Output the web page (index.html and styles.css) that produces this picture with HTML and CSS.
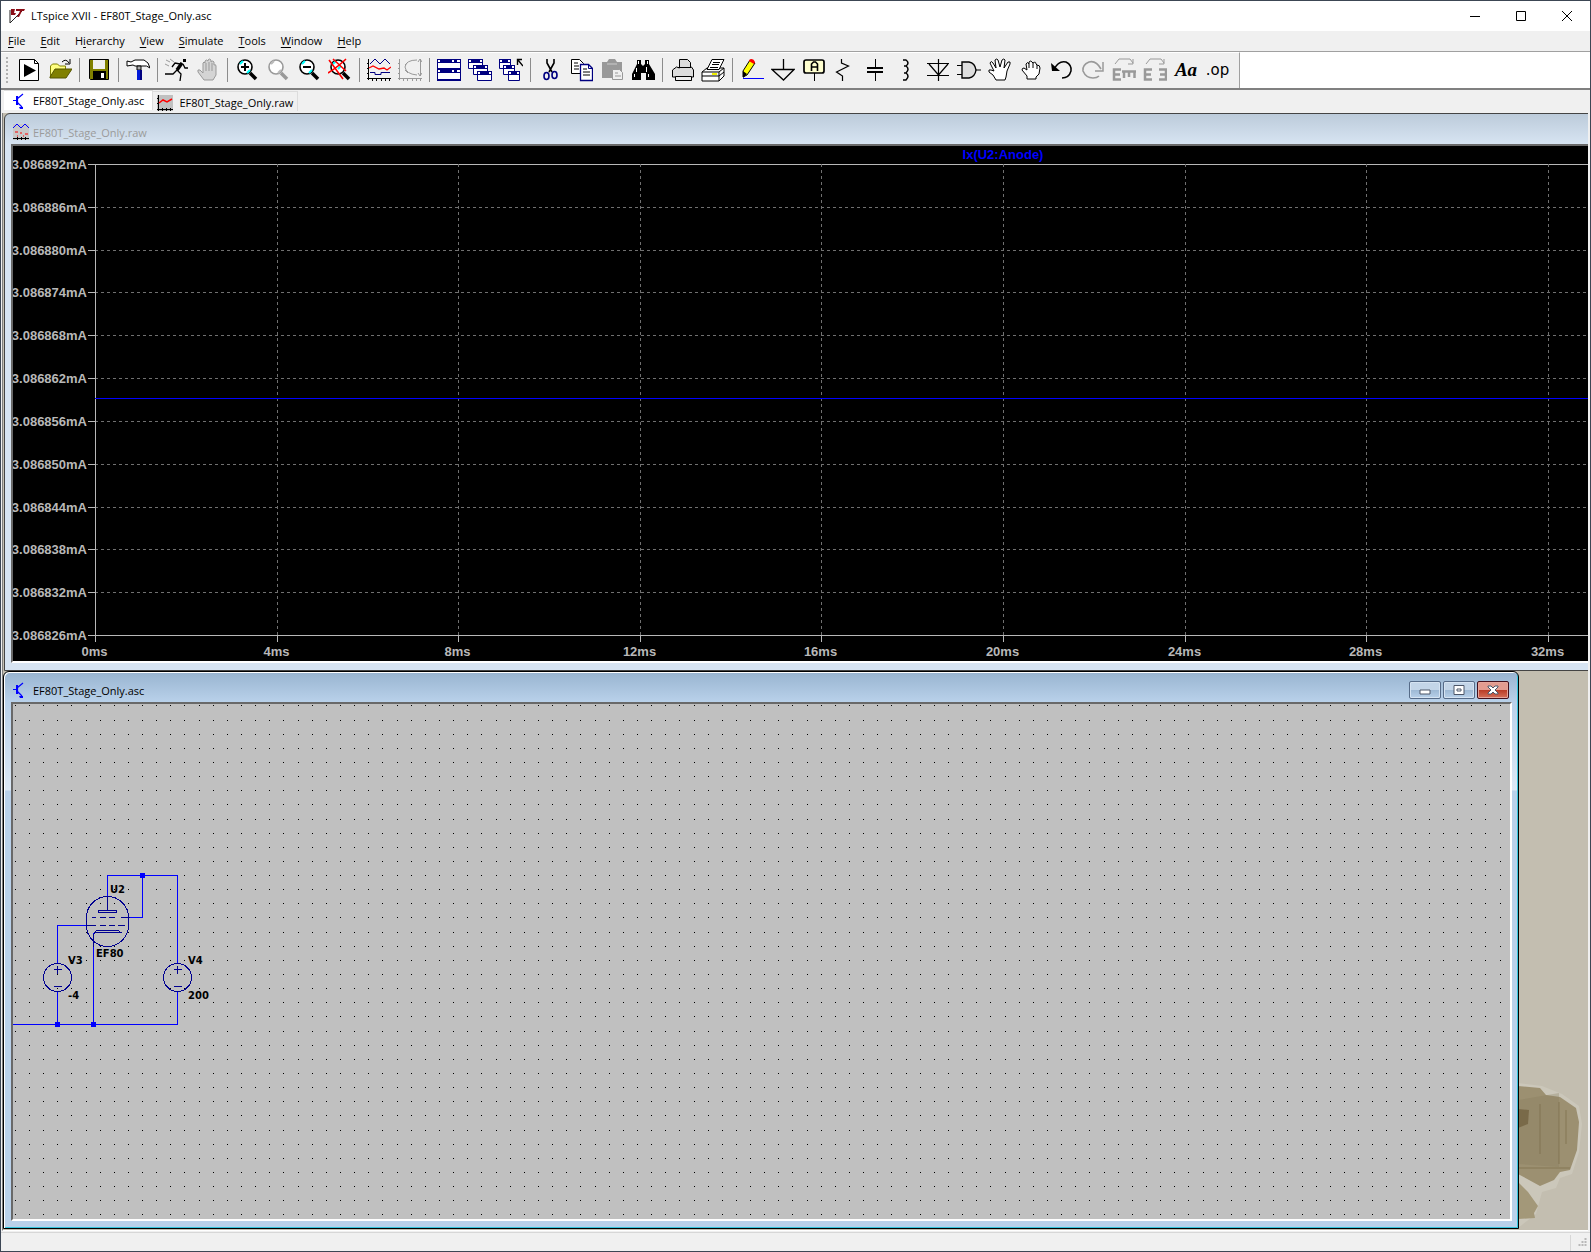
FILE: index.html
```html
<!DOCTYPE html>
<html lang="en">

<head>
    <meta charset="UTF-8">
    <meta name="viewport" content="width=device-width, initial-scale=1.0">
    <title>LTspice XVII - EF80T_Stage_Only.asc</title>
    <link rel="stylesheet" href="styles.css">
    <script src="script.js" defer></script>
</head>

<body>
    <!-- Shared symbols -->
    <svg class="symbols" aria-hidden="true">
        <symbol id="transistor" viewBox="0 0 16 16">
            <path d="M0 7.500h4M4.500 3v9M4 6l6-5M4 9l5 5" stroke="#00f" fill="none" stroke-width="1.200" />
            <path d="M3 3h2v9H3zM6 14h4v2H7z" fill="#00f" />
        </symbol>
        <symbol id="lens" viewBox="0 0 24 24">
            <path d="M15 15l6 6" stroke="currentColor" stroke-width="3.500" />
            <circle cx="10" cy="9" r="7" fill="#fff" stroke="currentColor" stroke-width="1.600" />
        </symbol>
    </svg>

    <div class="app">
        <header class="title-bar">
            <svg class="logo" viewBox="0 0 16 16">
                <path d="M1 2v13l13-13" fill="#fff" stroke="#222" />
                <path d="M2 1h4L5 5h2l-1 2H2zM7 1h9l-1 2h-2l-3 6H8l3-6H7z" fill="#8b0d16" />
            </svg>
            <h1>LTspice XVII - EF80T_Stage_Only.asc</h1>
            <div class="window-buttons">
                <button type="button" aria-label="Minimize"><svg viewBox="0 0 10 10"><path d="M0 5.500h10" /></svg></button>
                <button type="button" aria-label="Maximize"><svg viewBox="0 0 10 10"><path d="M.5.5h9v9h-9z" /></svg></button>
                <button type="button" aria-label="Close"><svg viewBox="0 0 10 10"><path d="M0 0l10 10M10 0L0 10" /></svg></button>
            </div>
        </header>

        <nav class="menu-bar">
            <button type="button"><u>F</u>ile</button>
            <button type="button"><u>E</u>dit</button>
            <button type="button">H<u>i</u>erarchy</button>
            <button type="button"><u>V</u>iew</button>
            <button type="button"><u>S</u>imulate</button>
            <button type="button"><u>T</u>ools</button>
            <button type="button"><u>W</u>indow</button>
            <button type="button"><u>H</u>elp</button>
        </nav>

        <div class="toolbar-row">
            <div class="toolbar">
                <span class="grip"></span>
                <button type="button" aria-label="New schematic"><svg viewBox="0 0 24 24">
                    <path d="M2.500 1.500h15l4 4v17h-19z" fill="#fff" stroke="#000" /><path d="M17.500 1.500v4h4" fill="none" stroke="#000" /><path d="M7 6v13l12-6.500z" />
                </svg></button>
                <button type="button" aria-label="Open"><svg viewBox="0 0 24 24">
                    <path d="M2.500 19V8l2-2h5l2 2h6v4" fill="#ffff80" stroke="#808000" /><path d="M2 19l5-8h17l-6 9H2z" fill="#808000" stroke="#555500" /><path d="M14 4q4-4 7 1M22 1v5h-5" fill="none" stroke="#000" />
                </svg></button>
                <span class="separator"></span>
                <button type="button" aria-label="Save"><svg viewBox="0 0 24 24">
                    <path d="M2.500 1.500h19v20h-18l-1-1z" fill="#808000" stroke="#000" /><path d="M6 2h12v9H6z" fill="#efefef" /><path d="M6 13h13v8H6z" /><path d="M14 15h3v5h-3z" fill="#fff" />
                </svg></button>
                <span class="separator"></span>
                <button type="button" aria-label="Control panel"><svg viewBox="0 0 24 24">
                    <path d="M1 3l4 1 4-2h9q5 2 6 8-3-3-8-2H9L7 7 1 8z" fill="#fff" stroke="#000" /><path d="M11 8h4v4h-4z" fill="#aaa" stroke="#000" /><path d="M11 12h5v10h-5z" fill="#0018d8" /><path d="M14 12h2v10h-2z" fill="#000080" />
                </svg></button>
                <span class="separator"></span>
                <button type="button" aria-label="Run"><svg viewBox="0 0 24 24">
                    <path d="M18 1h3v3h-3z" /><path d="M17 5l-5 7 4 4-1 7M12 12l-4 4H0M18 6l2 4h3M15 6l-5-1-3 4" fill="none" stroke="#000" stroke-width="1.300" /><path d="M17 5l-5 7" stroke="#000" stroke-width="3.500" /><path d="M1 2l4 2M5 1l4 3M0 6l4 2" stroke="#999" />
                </svg></button>
                <button type="button" aria-label="Halt" disabled><svg viewBox="0 0 24 24">
                    <path d="M8 22l-6-8q-1-3 2-2l3 3V5q1-2 2 0V3q1.500-2 3 0V2q1.500-2 3 0v2q2-2 3 0v3q2-1 2 1v9l-3 5z" fill="#d4d4d4" stroke="#999" /><path d="M10 5v8M13 4v9M16 5v8" stroke="#999" />
                </svg></button>
                <span class="separator"></span>
                <button type="button" aria-label="Zoom in"><svg viewBox="0 0 24 24"><use href="#lens" /><path d="M5 6l3-3M12 15l3-3" stroke="#0ff" stroke-width="2" /><path d="M6 9h8M10 5v8" stroke="#000" stroke-width="2" /></svg></button>
                <button type="button" aria-label="Pan" disabled><svg class="gray" viewBox="0 0 24 24"><use href="#lens" /><path d="M5 6l3-3M12 15l3-3" stroke="#bbb" stroke-width="2" /></svg></button>
                <button type="button" aria-label="Zoom out"><svg viewBox="0 0 24 24"><use href="#lens" /><path d="M5 6l3-3M12 15l3-3" stroke="#0ff" stroke-width="2" /><path d="M6 9h8" stroke="#000" stroke-width="2" /></svg></button>
                <button type="button" aria-label="Zoom full"><svg viewBox="0 0 24 24"><use href="#lens" /><path d="M5 6l3-3M10 11l3-3" stroke="#0ff" stroke-width="2" /><path d="M1 2l14 19M18 1Q11 8 0 15M5 1l13 12" fill="none" stroke="#f00" stroke-width="1.600" /></svg></button>
                <span class="separator"></span>
                <button type="button" aria-label="Waveforms"><svg viewBox="0 0 24 24">
                    <path d="M1.500 1v21M0 20.500h24M0 5.500h2M0 10.500h2M0 15.500h2M5.500 20v3M9.500 20v3M14.500 20v3M18.500 20v3M22.500 20v3" stroke="#000" /><path d="M3 6l5-5 5 5 5-5 5 5M3 14.500h5v2h6v-2h9" fill="none" stroke="#000080" /><path d="M2 10l4-2 6 3 5-1 3 2 4-3" fill="none" stroke="#f00" stroke-width="1.300" />
                </svg></button>
                <button type="button" aria-label="Autorange" disabled><svg viewBox="0 0 24 24">
                    <path d="M1.500 1v21M0 20.500h24M0 5.500h2M0 10.500h2M0 15.500h2M5.500 20v3M9.500 20v3M14.500 20v3M18.500 20v3M22.500 20v3M22.500 1v17M20 4l2-3 2 3M20 15l2 3 2-3M19 2Q8 2 7 9q1 7 12 8M7 7l3-3M7 12l3 3" fill="none" stroke="#999" />
                </svg></button>
                <span class="separator"></span>
                <button type="button" aria-label="Tile windows"><svg viewBox="0 0 24 24">
                    <path d="M0 1h24v22H0z" fill="#000080" /><path d="M1 5h22v5H1zM1 15h22v6H1zM1 2h2v2H1zM15 2h2v2h-2zM20 2h3v2h-3zM1 12h2v2H1zM15 12h2v2h-2zM20 12h3v2h-3z" fill="#fff" />
                </svg></button>
                <button type="button" aria-label="Cascade windows"><svg viewBox="0 0 24 24">
                    <g fill="#fff" stroke="#000080"><path d="M.5 1.500h14v9H.5z" /><path d="M5.500 7.500h14v9h-14z" /><path d="M9.500 13.500h14v9h-14z" /></g><path d="M0 1h15v4H0zM5 7h15v4H5zM9 13h15v4H9z" fill="#000080" /><path d="M1 2h2v2H1zM12 2h2v2h-2zM6 8h2v2H6zM17 8h2v2h-2zM10 14h2v2h-2zM21 14h2v2h-2z" fill="#fff" />
                </svg></button>
                <button type="button" aria-label="Close all windows"><svg viewBox="0 0 24 24">
                    <g fill="#fff" stroke="#000080"><path d="M.5 1.500h11v9H.5z" /><path d="M4.500 7.500h11v9h-11z" /><path d="M9.500 13.500h11v9h-11z" /></g><path d="M0 1h12v4H0zM4 7h12v4H4zM9 13h12v4H9z" fill="#000080" /><path d="M1 2h2v2H1zM9 2h2v2H9zM5 8h2v2H5zM13 8h2v2h-2zM10 14h2v2h-2zM18 14h2v2h-2z" fill="#fff" /><path d="M18.500 7V1.500H23M19 2l5 6" fill="none" stroke="#000" stroke-width="1.400" />
                </svg></button>
                <span class="separator"></span>
                <button type="button" aria-label="Cut"><svg viewBox="0 0 24 24">
                    <path d="M9 1v4l5 9M16 1v4l-5 9" fill="none" stroke="#000" stroke-width="1.600" /><g fill="none" stroke="#000080" stroke-width="1.600"><ellipse cx="8.500" cy="18" rx="2.500" ry="3.500" /><ellipse cx="16.500" cy="17" rx="2.500" ry="3.500" /></g>
                </svg></button>
                <button type="button" aria-label="Copy"><svg viewBox="0 0 24 24">
                    <path d="M2.500 1.500h8l4 4v10h-12z" fill="#fff" stroke="#000" /><path d="M5 5h4M5 8h5M5 11h5" stroke="#000" /><path d="M11.500 6.500h8l4 4v12h-12z" fill="#fff" stroke="#000080" stroke-width="1.300" /><path d="M19.500 6.500v4h4" fill="none" stroke="#000080" /><path d="M14 11h4M14 14h7M14 17h7" stroke="#000" />
                </svg></button>
                <button type="button" aria-label="Paste" disabled><svg viewBox="0 0 24 24">
                    <path d="M2 4h5l2-3h6l2 3h5v16H2z" fill="#999" /><path d="M7 6h10" stroke="#ccc" /><path d="M12.500 11.500h7l3 3v7h-10z" fill="#f0f0f0" stroke="#999" /><path d="M15 15h3M15 18h6" stroke="#999" />
                </svg></button>
                <button type="button" aria-label="Find"><svg viewBox="0 0 24 24">
                    <path d="M6 2h4v4l2 2 2-2V2h4v4l6 10v6h-9v-7h-5v7H1v-6L6 6z" /><path d="M7 3h1v3H7zM16 3h1v3h-1zM5 10h1v4H5zM3 16h1v3H3zM15 9h1v5h-1zM17 16h1v3h-1z" fill="#fff" />
                </svg></button>
                <span class="separator"></span>
                <button type="button" aria-label="Print"><svg viewBox="0 0 24 24">
                    <path d="M9.500 10V1.500h8l3 3V9h1l2 3v7h-2v3h-16v-3h-3v-7l4-3z" fill="#ddd" stroke="#000" /><path d="M8 9.500h13M5.500 18.500h16v4h-16z" fill="#eee" stroke="#000" />
                </svg></button>
                <button type="button" aria-label="Print setup"><svg viewBox="0 0 24 24">
                    <path d="M1 14l5-4h17v8l-5 5H1zM1 14h17l5-4M18 14v9M1 18h17l5-4" fill="#fff" stroke="#000" /><path d="M11 1.500h12l-5 10H6z" fill="#fff" stroke="#000" /><path d="M12 4.500h7M11 6.500h7M9 9.500h8" stroke="#000" /><path d="M11 15h5v2h-5z" fill="#ee0" />
                </svg></button>
                <span class="separator"></span>
                <button type="button" aria-label="Wire"><svg viewBox="0 0 24 24">
                    <path d="M10 2l5 3-8 12-4 2v-6z" fill="#ff0" stroke="#000" /><path d="M9 2q4-3 6 2l-1 2-5-3z" fill="#f00" /><path d="M3 13l4 3-4 4z" /><path d="M3 20.500h21" stroke="#00f" />
                </svg></button>
                <button type="button" aria-label="Ground"><svg viewBox="0 0 24 24"><path d="M12.500 1v10M1 11.500h22L12.500 22z" fill="none" stroke="#000" stroke-width="1.300" /></svg></button>
                <button type="button" aria-label="Label net"><svg viewBox="0 0 24 24">
                    <path d="M12.500 15v8" stroke="#000" /><rect x="2" y="2" width="20" height="13" rx="2" fill="#ffffd0" stroke="#000" stroke-width="1.700" /><path d="M9.500 13V6l2-2h2l2 2v7M9.500 9h6" fill="none" stroke="#000" stroke-width="1.600" />
                </svg></button>
                <button type="button" aria-label="Resistor"><svg viewBox="0 0 24 24"><path d="M8.500 1v4l7 3-12 6 6 4v5" fill="none" stroke="#000" stroke-width="1.200" /></svg></button>
                <button type="button" aria-label="Capacitor"><svg viewBox="0 0 24 24"><path d="M11.500 1v8M11.500 15v8" stroke="#000" /><path d="M3 10h16M3 14h16" stroke="#000" stroke-width="2" /></svg></button>
                <button type="button" aria-label="Inductor"><svg viewBox="0 0 24 24"><path d="M8 2h3q4 3 0 6H9h2q4 3 0 7H9h2q4 3 0 7H8" fill="none" stroke="#000" stroke-width="1.500" /></svg></button>
                <button type="button" aria-label="Diode"><svg viewBox="0 0 24 24"><path d="M12.500 1v22M1 5.500h22M3 6l9.500 11L22 6M1 17.500h22" fill="none" stroke="#000" stroke-width="1.200" /></svg></button>
                <button type="button" aria-label="Component"><svg viewBox="0 0 24 24"><path d="M0 7.500h5M0 16.500h5M18 12h6" stroke="#000" /><path d="M5 4h7q6 1 7 8-1 7-7 8H5z" fill="#ddd" stroke="#000" stroke-width="1.400" /></svg></button>
                <button type="button" aria-label="Move"><svg viewBox="0 0 24 24">
                    <path d="M8 22l-3-5-4-3q-1-3 2-2l3 1-4-8q1-3 3 0l3 5-1-8q2-2 3 0l2 7 2-7q2-2 3 0l-1 8 4-6q3-1 2 2l-3 7-1 6-1 3z" fill="#fff" stroke="#000" />
                </svg></button>
                <button type="button" aria-label="Drag"><svg viewBox="0 0 24 24">
                    <path d="M8 21v-3l-5-6q0-2 2-2l3 2-1-6q2-3 3 0V4q2-2 3 0l1 1q3-2 3 1l1 1q3 0 3 3l-1 6-3 3v2z" fill="#fff" stroke="#000" /><path d="M10 6v4M14 5v5M18 7v4" stroke="#000" />
                </svg></button>
                <button type="button" aria-label="Undo"><svg viewBox="0 0 24 24"><path d="M4 11Q9 2 16 4q6 3 5 9-2 7-9 7" fill="none" stroke="#000" stroke-width="1.500" /><path d="M1 5l1 8h8z" /></svg></button>
                <button type="button" aria-label="Redo" disabled><svg viewBox="0 0 24 24"><path d="M20 11Q15 2 8 4 1 7 2 13q3 7 10 7 4 0 6-2" fill="none" stroke="#999" stroke-width="1.600" /><path d="M22 4v9h-8" fill="none" stroke="#999" stroke-width="1.500" /></svg></button>
                <button type="button" aria-label="Rotate" disabled><svg viewBox="0 0 24 24"><path d="M3 6l4-5h11l3 4M21 1v5h-5" fill="none" stroke="#999" /><path d="M9 11.500H2v10h7M2 16.500h6M10 13.500h14M12 13v7M17 13v6M22.500 13v7" fill="none" stroke="#999" stroke-width="2.500" /></svg></button>
                <button type="button" aria-label="Mirror" disabled><svg viewBox="0 0 24 24"><path d="M3 6l4-5h11l3 4M21 1v5h-5" fill="none" stroke="#999" /><path d="M9 11.500H2v10h7M2 16.500h6M16 11.500h7v10h-7M23 16.500h-6" fill="none" stroke="#999" stroke-width="2.500" /></svg></button>
                <button type="button" class="text-tool" aria-label="Text">Aa</button>
                <button type="button" class="op-tool" aria-label="SPICE directive">.op</button>
            </div>
        </div>

        <div class="tabs">
            <button type="button" class="tab active"><svg><use href="#transistor" /></svg>EF80T_Stage_Only.asc</button>
            <button type="button" class="tab"><svg viewBox="0 0 16 16">
                <path d="M0 0h16v16H0z" fill="#c0c0c0" /><path d="M1.500 0v16M0 14.500h16M0 3.500h2M0 8.500h2M5.500 13v3M9.500 13v3M13.500 13v3" stroke="#000" /><path d="M2 8l4-3 4 2 5-3" fill="none" stroke="#f00" stroke-width="1.500" />
            </svg>EF80T_Stage_Only.raw</button>
        </div>

        <main class="desktop">
            <svg class="stain" viewBox="0 0 70 150" aria-hidden="true">
                <path d="M0 3l24 3 20 8 17 12 3 18-3 28-7 22-12 4-4 10-14 4-6 22-18 14z" fill="#cbc7ba" />
                <path d="M0 6l22 2 6 7 14 2 16 11 3 14-2 28-7 20-10 2-6 8-14 6L0 94z" fill="#9c9071" />
                <path d="M0 20l41-7v74L0 84z" fill="#867958" opacity=".3" />
                <path d="M0 29l11 1-1 14-10 4z" fill="#6d5d3c" opacity=".7" />
                <path d="M41 22v62M48 30v34M0 88h52M22 24v50" stroke="#7b6c49" stroke-width="2" opacity=".35" />
                <path d="M0 102l10 10 10 14-4 7 1 5-17 1z" fill="#a39879" />
            </svg>

            <!-- Waveform window -->
            <section class="child plot-window">
                <div class="child-title">
                    <svg viewBox="0 0 16 16">
                        <path d="M0 0h16v16H0z" fill="#c8c8c8" /><path d="M0 4l4-4 4 4 4-4 4 4" fill="none" stroke="#00f" /><path d="M2 8h3M7 9h2M12 10h3M4 12h1M10 12h1" stroke="#f00" /><path d="M0 14.500h16M4.500 13v3M8.500 13v3M12.500 13v3" stroke="#000" />
                    </svg>
                    <h2>EF80T_Stage_Only.raw</h2>
                </div>
                <div class="child-body"><svg id="plot"></svg></div>
            </section>

            <!-- Schematic window -->
            <section class="child schematic-window">
                <div class="child-title">
                    <svg><use href="#transistor" /></svg>
                    <h2>EF80T_Stage_Only.asc</h2>
                    <div class="child-buttons">
                        <button type="button" aria-label="Minimize"><svg viewBox="0 0 12 10"><path d="M1 5h10v4H1z" /></svg></button>
                        <button type="button" aria-label="Restore"><svg viewBox="0 0 12 10"><path d="M1 .5h10v9H1zM4 4h4v2H4z" /></svg></button>
                        <button type="button" class="close" aria-label="Close"><svg viewBox="0 0 12 10"><path d="M1 1h3l2 2 2-2h3v1L8 5l3 3v1H8L6 7 4 9H1V8l3-3-3-3z" /></svg></button>
                    </div>
                </div>
                <div class="child-body">
                    <svg id="schematic">
                        <path id="dots" />
                        <g class="wires">
                            <path d="M94 192V171H164V259M129 171V213H116M44 259V221H73M80 228V320M44 287V320M164 287V320H-1" />
                        </g>
                        <g class="nodes">
                            <rect x="127" y="169" width="5" height="5" />
                            <rect x="42" y="318" width="5" height="5" />
                            <rect x="78" y="318" width="5" height="5" />
                        </g>
                        <g class="parts">
                            <path d="M73 213a21 21 0 0 1 42 0v8a21 21 0 0 1-42 0z" />
                            <path d="M94 192V206M85 206h18v2H85zM78 213h4M86 213h6M95 213h6M107 213h9M73 221h9M86 221h6M95 221h6M104 221h7M80 242V230l3-4h22l3 3M82 228h26" />
                            <circle cx="44" cy="273" r="14" />
                            <circle cx="164" cy="273" r="14" />
                            <path d="M44 261v8M40 265h8M40 282h8M164 261v8M160 265h8M160 282h8" />
                        </g>
                        <g class="names">
                            <text x="97" y="189">U2</text>
                            <text x="83" y="253">EF80</text>
                            <text x="55" y="260">V3</text>
                            <text x="55" y="295">-4</text>
                            <text x="175" y="260">V4</text>
                            <text x="175" y="295">200</text>
                        </g>
                    </svg>
                </div>
            </section>
        </main>

        <footer class="status-bar">
            <svg class="resize-grip" viewBox="0 0 12 12"><path d="M8 1h2v2H8zM5 4h2v2H5zM8 4h2v2H8zM2 7h2v2H2zM5 7h2v2H5zM8 7h2v2H8z" fill="#b8b8b8" /></svg>
        </footer>
    </div>
</body>

</html>
```
FILE: styles.css
```css
* {
    box-sizing: border-box;
}

body {
    margin: 0;
    font-family: "Open Sans", sans-serif;
    font-size: 11px;
    color: #000;
}

button {
    margin: 0;
    padding: 0;
    border: none;
    background: none;
    font: inherit;
    color: inherit;
}

h1,
h2 {
    margin: 0;
    font-size: 11px;
    font-weight: normal;
    white-space: nowrap;
}

.symbols {
    position: absolute;
    width: 0;
    height: 0;
}

.app {
    display: flex;
    flex-direction: column;
    height: 100vh;
    border: 1px solid #3c4654;
    background-color: #f0f0f0;
}

/* Main window title */
.title-bar {
    display: flex;
    align-items: center;
    height: 30px;
    padding-left: 8px;
    gap: 6px;
    background-color: #fff;
}

.title-bar h1 {
    padding-bottom: 1px;
}

.logo {
    width: 16px;
    height: 16px;
}

.window-buttons {
    display: flex;
    align-self: stretch;
    margin-left: auto;
}

.window-buttons button {
    width: 46px;
}

.window-buttons svg {
    width: 10px;
    height: 10px;
    fill: none;
    stroke: #000;
}

/* Menu */
.menu-bar {
    display: flex;
    height: 20px;
    padding: 0 0 1px 7px;
    gap: 15px;
}

.menu-bar u {
    text-underline-offset: 2px;
}

/* Toolbar */
.toolbar-row {
    height: 39px;
    border-top: 1px solid #a0a0a0;
    border-bottom: 2px solid #808080;
    background-color: #fff;
}

.toolbar {
    display: flex;
    align-items: center;
    width: max-content;
    height: 36px;
    padding: 0 6px 1px 5px;
    border-top: 1px solid #fff;
    border-right: 1px solid #a0a0a0;
    background-color: #f0f0f0;
}

.toolbar button {
    width: 31px;
    height: 24px;
    padding: 0 4px 0 3px;
}

.toolbar svg {
    display: block;
    width: 24px;
    height: 24px;
}

.toolbar .gray {
    color: #999;
}

.grip {
    width: 2px;
    height: 26px;
    margin-right: 6px;
    background: repeating-linear-gradient(#b0b0b0 0 2px, transparent 2px 4px);
}

.separator {
    width: 1px;
    height: 24px;
    margin: 0 4px 0 3px;
    background-color: #8c8c8c;
}

.toolbar .text-tool {
    font: italic bold 19px/24px "Liberation Serif", serif;
}

.toolbar .op-tool {
    padding: 0;
    font: 15px/22px "DejaVu Sans", sans-serif;
}

/* Document tabs */
.tabs {
    display: flex;
    align-items: flex-start;
    height: 23px;
    padding-left: 3px;
}

.tab {
    display: flex;
    align-items: center;
    height: 20px;
    margin-top: 1px;
    padding: 2px 4px 0 4px;
    gap: 6px;
    border-top: 1px solid #dcdcdc;
    border-right: 1px solid #dcdcdc;
}

.tab.active {
    margin-top: 0;
    padding: 0 8px 0 9px;
    gap: 4px;
    background-color: #fff;
}

.tab svg {
    width: 16px;
    height: 16px;
}

/* Area with the child windows */
.desktop {
    position: relative;
    flex: 1;
    margin: 0 2px 1px 1px;
    overflow: hidden;
    border-left: 1px solid #808080;
    border-bottom: 1px solid #fff;
    background-color: #c3beb0;
}

.stain {
    position: absolute;
    right: 0;
    bottom: 0;
    width: 70px;
    height: 150px;
}

.child {
    position: absolute;
    display: flex;
    flex-direction: column;
    height: 558px;
    border: 1px solid #444;
    border-radius: 6px 6px 0 0;
    padding: 0 6px 7px 6px;
}

.plot-window {
    top: 0;
    left: 1px;
    right: -20px;
    color: #9b9b9b;
    background: linear-gradient(#bccbda, #d7e4f2 30px);
}

.schematic-window {
    top: 558px;
    left: 0;
    right: 69px;
    padding-left: 7px;
    border-color: #000;
    background: linear-gradient(#98b4d0, #b9d1ea 30px, #dce8f5 118px, #b9d1ea 119px);
    box-shadow: inset 1px 1px #fff, inset -1px -1px #35c5dc;
}

.child-title {
    display: flex;
    align-items: center;
    height: 30px;
    padding: 6px 3px 0 2px;
    gap: 4px;
}

.child-title > svg {
    width: 16px;
    height: 16px;
}

.child-buttons {
    display: flex;
    gap: 2px;
    margin-left: auto;
}

.child-buttons button {
    display: flex;
    align-items: center;
    justify-content: center;
    width: 32px;
    height: 18px;
    border: 1px solid #566b88;
    border-radius: 2px;
    background: linear-gradient(#c3d5e8 0 8px, #9db8d4 8px, #b9d1ea);
    box-shadow: inset 0 0 0 1px #d5e3f2;
}

.child-buttons svg {
    width: 12px;
    height: 10px;
    fill: #fff;
    stroke: #4c5668;
}

.child-buttons .close {
    border-color: #43101c;
    background: linear-gradient(#e39c90 0 8px, #b83a25 8px, #d5705a);
    box-shadow: inset 0 0 0 1px #e5a59b;
}

.child-body {
    flex: 1;
    min-height: 0;
    border: 2px solid #696969;
    border-right-color: #fff;
    border-bottom-color: #fff;
}

.child-body svg {
    display: block;
    width: 100%;
    height: 100%;
}

/* Waveform plot */
#plot {
    background-color: #000;
    font: bold 13px "Liberation Sans", sans-serif;
    fill: #b8b8b8;
    shape-rendering: crispEdges;
}

#plot line {
    stroke: #b8b8b8;
}

#plot .grid {
    stroke: #707070;
    stroke-dasharray: 3 3;
}

#plot .trace {
    stroke: #00f;
}

#plot .trace-name {
    fill: #00f;
}

/* Schematic */
#schematic {
    background-color: #c0c0c0;
    fill: none;
}

#dots,
.wires {
    stroke: #000;
    shape-rendering: crispEdges;
}

.wires {
    stroke: #00f;
}

.wires path,
.parts {
    transform: translate(0.5px, 0.5px);
}

.nodes {
    fill: #00f;
}

.parts {
    stroke: #000090;
    shape-rendering: crispEdges;
}

.names {
    fill: #000;
    font: bold 10px "DejaVu Sans", sans-serif;
}

/* Status bar */
.status-bar {
    display: flex;
    align-items: flex-end;
    justify-content: flex-end;
    height: 19px;
    border-top: 1px solid #d7d7d7;
}

.resize-grip {
    width: 20px;
    height: 16px;
    padding: 2px 0 2px 4px;
    border-left: 1px solid #d7d7d7;
}
```
FILE: script.js
```js
const SVG_NS = 'http://www.w3.org/2000/svg';

function add(parent, tag, attrs, text) {
    const el = document.createElementNS(SVG_NS, tag);
    for (const name in attrs) {
        el.setAttribute(name, attrs[name]);
    }
    if (text) {
        el.textContent = text;
    }
    parent.appendChild(el);
}

function drawPlot() {
    const plot = document.getElementById('plot');
    const left = 82, top = 18, bottom = 489;
    const rows = 11;

    // current axis, 6nA per division
    for (let i = 0; i <= rows; i++) {
        const y = Math.round(top + (bottom - top) * i / rows) + 0.5;
        const value = ((3086892 - 6 * i) / 1000000).toFixed(6);
        const edge = i === 0 || i === rows;
        add(plot, 'line', { x1: left, x2: '100%', y1: y, y2: y, class: edge ? 'axis' : 'grid' });
        add(plot, 'line', { x1: left - 7, x2: left, y1: y, y2: y });
        add(plot, 'text', { x: left - 8, y: y + 4, 'text-anchor': 'end' }, value + 'mA');
    }

    // time axis
    for (let i = 0; i <= 8; i++) {
        const x = Math.round(left + 181.6 * i) + 0.5;
        add(plot, 'line', { x1: x, x2: x, y1: top, y2: bottom, class: i ? 'grid' : 'axis' });
        add(plot, 'line', { x1: x, x2: x, y1: bottom, y2: bottom + 7 });
        add(plot, 'text', { x: x - 1, y: 510, 'text-anchor': 'middle' }, i * 4 + 'ms');
    }

    add(plot, 'line', { x1: left, x2: '100%', y1: 252.5, y2: 252.5, class: 'trace' });
    add(plot, 'text', { x: 990, y: 13, 'text-anchor': 'middle', class: 'trace-name' }, 'Ix(U2:Anode)');
}

function drawDots() {
    const box = document.getElementById('schematic').getBoundingClientRect();
    const pitch = 14.14;
    let d = '';
    for (let y = 1.9; y < box.height; y += pitch) {
        for (let x = 2.3; x < box.width; x += pitch) {
            d += `M${Math.floor(x)} ${Math.floor(y) + 0.5}h1`;
        }
    }
    document.getElementById('dots').setAttribute('d', d);
}

drawPlot();
drawDots();
window.addEventListener('resize', drawDots);
```
